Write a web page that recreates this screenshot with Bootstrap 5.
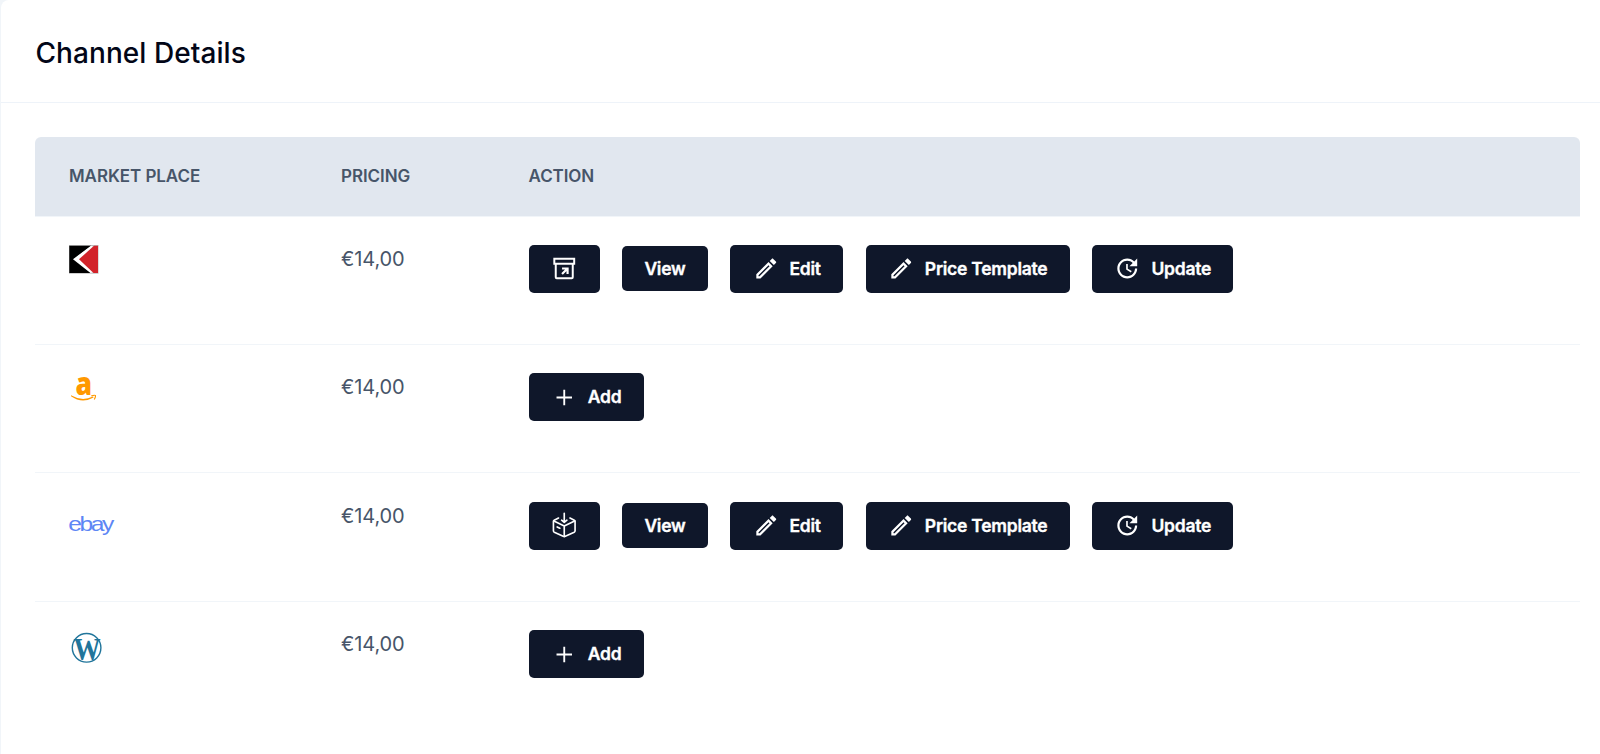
<!DOCTYPE html>
<html lang="en">

<head>
    <meta charset="UTF-8">
    <meta name="viewport" content="width=device-width, initial-scale=1.0">
    <title>Channel Details</title>
    <link rel="stylesheet" href="https://cdn.jsdelivr.net/npm/bootstrap@5.3.0/dist/css/bootstrap.min.css">
    <style>
        body {
            font-family: Inter, "Liberation Sans", sans-serif;
            background-color: #f1f5f9;
            overflow: hidden;
        }

        .channel-card {
            height: 100vh;
            margin-left: 1px;
            border-radius: 8px 0 0 0;
        }

        .channel-header {
            height: 102.5px;
            padding: 7px 34px 0 34.5px;
            border-bottom: 1px solid #eef3f9;
        }

        .channel-title {
            font-size: 28px;
            font-weight: 500;
            letter-spacing: 0.07px;
            color: #020617;
        }

        .channel-body {
            padding: 34px 20px 0 34px;
        }

        .channel-table {
            table-layout: fixed;
            border-collapse: separate;
            border-spacing: 0;
            color: #475569;
        }

        .channel-table th {
            height: 80px;
            padding: 1px 34px 0;
            background-color: #e1e7ef;
            border-bottom: 1px solid #f1f5f9;
            font-size: 17px;
            font-weight: 600;
            letter-spacing: -0.07px;
            vertical-align: middle;
        }

        .channel-table th:first-child {
            border-top-left-radius: 6px;
        }

        .channel-table th:last-child {
            border-top-right-radius: 6px;
        }

        .channel-table td {
            height: 128.4px;
            padding: 28.4px 34px 0;
            border-bottom: 1px solid #f1f5f9;
            font-size: 20px;
            line-height: 28px;
            letter-spacing: -0.1px;
            vertical-align: top;
        }

        .channel-table tbody tr:last-child td {
            border-bottom: 0;
        }

        .col-market {
            width: 272px;
        }

        .col-pricing {
            width: 187.5px;
        }

        .actions {
            gap: 22.5px;
        }

        .btn-dark-blue {
            --bs-btn-color: #fff;
            --bs-btn-bg: #0f172a;
            --bs-btn-border-width: 0;
            --bs-btn-hover-color: #fff;
            --bs-btn-hover-bg: #1e293b;
            --bs-btn-padding-x: 22.3px;
            --bs-btn-padding-y: 0;
            --bs-btn-font-size: 17.5px;
            --bs-btn-font-weight: 600;
            --bs-btn-border-radius: 5px;
            height: 48px;
            gap: 10.5px;
            letter-spacing: -0.26px;
            white-space: nowrap;
            -webkit-text-stroke: 0.35px #fff;
        }

        .btn-view {
            height: 45px;
        }

        .btn-dark-blue svg {
            width: 26.5px;
            height: 27px;
            flex: none;
        }

        .logo {
            display: block;
            overflow: visible;
        }

        .logo-ebay {
            letter-spacing: -2px;
        }
    </style>
</head>

<body>
    <!-- icons -->
    <svg class="d-none">
        <symbol id="icon-edit" viewBox="0 0 24 24">
            <path fill="currentColor" d="M14.06 9.02l.92.92L5.92 19H5v-.92l9.06-9.06M17.66 3c-.25 0-.51.1-.7.29l-1.83 1.83 3.75 3.75 1.83-1.83c.39-.39.39-1.02 0-1.41l-2.34-2.34c-.2-.2-.45-.29-.71-.29zm-3.6 3.19L3 17.25V21h3.75L17.81 9.94l-3.75-3.75z" />
        </symbol>
        <symbol id="icon-update" viewBox="0 0 24 24">
            <path fill="currentColor" d="M11 8v5l4.25 2.52.77-1.28-3.52-2.09V8zm10 2V3l-2.64 2.64C16.74 4.01 14.49 3 12 3c-4.97 0-9 4.03-9 9s4.03 9 9 9 9-4.03 9-9h-2c0 3.86-3.14 7-7 7s-7-3.14-7-7 3.14-7 7-7c1.93 0 3.68.79 4.95 2.05L14 10h7z" />
        </symbol>
        <symbol id="icon-add" viewBox="0 0 24 24">
            <path fill="none" stroke="currentColor" stroke-width="1.7" d="M12 5v14M5 12h14" />
        </symbol>
        <symbol id="icon-archive" viewBox="0 0 24 24">
            <g fill="none" stroke="currentColor" stroke-width="1.8">
                <path d="M3 3.2h18v4.6H3zM4.3 7.8v12.2q0 .9.9.9h13.600q.9 0 .9-.9V7.8" />
                <path d="M10 12h5v5M15 12l-5 5" stroke-width="2" />
            </g>
        </symbol>
        <symbol id="icon-box" viewBox="0 0 24 24">
            <g fill="none" stroke="currentColor" stroke-width="1.5" stroke-linecap="round" stroke-linejoin="round">
                <path d="M6.8 5.2L2.9 7.2q-.7.4-.7 1v8.600q0 .9.8 1.3l8 3.700q1 .5 2 0l8-3.700q.8-.4.8-1.300V8.200q0-.6-.7-1L17.200 5.200" />
                <path d="M2.6 7.9L12 12.4l9.400-4.500M12 12.400v9.600M12 1v8M9.600 7.200L12 9.200l2.400-2M5.600 13.300l2.400 1.200" />
            </g>
        </symbol>
    </svg>

    <div class="channel-card bg-white">
        <div class="channel-header d-flex align-items-center">
            <h1 class="channel-title mb-0">Channel Details</h1>
        </div>
        <div class="channel-body">
            <table class="channel-table w-100">
                <thead>
                    <tr>
                        <th class="col-market">MARKET PLACE</th>
                        <th class="col-pricing">PRICING</th>
                        <th>ACTION</th>
                    </tr>
                </thead>
                <tbody>
                    <tr>
                        <td>
                            <svg class="logo" width="30" height="29" viewBox="0 0 30 29">
                                <path fill="#bbb" d="M0 0h29.5v28.7H0z" />
                                <path fill="#000" d="M.3.8h22L5 14l17 14H.3z" />
                                <path fill="#fff" d="M22 .8L4 14.2 21.5 28l3.500-1V2z" />
                                <path fill="#d2232a" d="M25 .8h4V28h-4.500L10 14.300z" />
                            </svg>
                        </td>
                        <td>€14,00</td>
                        <td>
                            <div class="actions d-flex align-items-center">
                                <button class="btn btn-dark-blue d-flex align-items-center" aria-label="Archive"><svg><use href="#icon-archive" /></svg></button>
                                <button class="btn btn-dark-blue btn-view">View</button>
                                <button class="btn btn-dark-blue d-flex align-items-center"><svg><use href="#icon-edit" /></svg>Edit</button>
                                <button class="btn btn-dark-blue d-flex align-items-center"><svg><use href="#icon-edit" /></svg>Price Template</button>
                                <button class="btn btn-dark-blue d-flex align-items-center"><svg><use href="#icon-update" /></svg>Update</button>
                            </div>
                        </td>
                    </tr>
                    <tr>
                        <td>
                            <svg class="logo" width="30" height="29" viewBox="0 0 30 29">
                                <text x="6.5" y="21.5" font-family="Open Sans" font-weight="800" font-size="31" textLength="16.5" lengthAdjust="spacingAndGlyphs" fill="#f90">a</text>
                                <path fill="#f90" d="M2 22.3q11 6.5 22 1.200l.6.900Q13 31 2 23.200z" />
                                <path fill="none" stroke="#f90" stroke-width="1.2" d="M22.3 22.800q3.800-1 4.200-.2t-1.200 4" />
                            </svg>
                        </td>
                        <td>€14,00</td>
                        <td>
                            <div class="actions d-flex align-items-center">
                                <button class="btn btn-dark-blue d-flex align-items-center"><svg><use href="#icon-add" /></svg>Add</button>
                            </div>
                        </td>
                    </tr>
                    <tr>
                        <td>
                            <svg class="logo" width="46" height="32" viewBox="0 0 46 32">
                                <text class="logo-ebay" transform="translate(-.8 28.5) scale(1.2 1)" font-family="Liberation Sans" font-size="20.5" fill="#5d86f5">ebay</text>
                            </svg>
                        </td>
                        <td>€14,00</td>
                        <td>
                            <div class="actions d-flex align-items-center">
                                <button class="btn btn-dark-blue d-flex align-items-center" aria-label="Package"><svg><use href="#icon-box" /></svg></button>
                                <button class="btn btn-dark-blue btn-view">View</button>
                                <button class="btn btn-dark-blue d-flex align-items-center"><svg><use href="#icon-edit" /></svg>Edit</button>
                                <button class="btn btn-dark-blue d-flex align-items-center"><svg><use href="#icon-edit" /></svg>Price Template</button>
                                <button class="btn btn-dark-blue d-flex align-items-center"><svg><use href="#icon-update" /></svg>Update</button>
                            </div>
                        </td>
                    </tr>
                    <tr>
                        <td>
                            <svg class="logo" width="34" height="34" viewBox="0 0 34 34">
                                <circle cx="17.6" cy="17.8" r="14.3" fill="#fff" stroke="#21759b" stroke-width="1.4" />
                                <text x="4.5" y="30" font-family="Liberation Serif" font-weight="700" font-size="31" textLength="27" lengthAdjust="spacingAndGlyphs" fill="#21759b">W</text>
                            </svg>
                        </td>
                        <td>€14,00</td>
                        <td>
                            <div class="actions d-flex align-items-center">
                                <button class="btn btn-dark-blue d-flex align-items-center"><svg><use href="#icon-add" /></svg>Add</button>
                            </div>
                        </td>
                    </tr>
                </tbody>
            </table>
        </div>
    </div>
    <script src="https://cdn.jsdelivr.net/npm/bootstrap@5.3.0/dist/js/bootstrap.bundle.min.js"></script>
</body>

</html>
